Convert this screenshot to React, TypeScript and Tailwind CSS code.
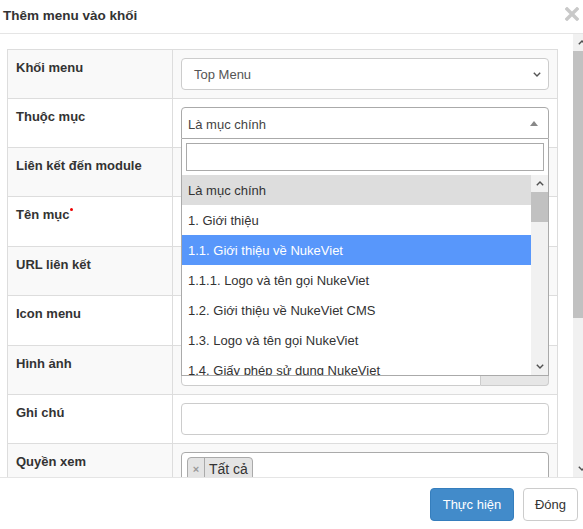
import React from "react";

type Field = "select" | "select2" | "plain" | "input" | "browse" | "multi";

interface Row {
  label: string;
  field: Field;
  height: string;
  required?: boolean;
}

const ROWS: Row[] = [
  { label: "Khối menu", field: "select", height: "h-[49px]" },
  { label: "Thuộc mục", field: "select2", height: "h-[49px]" },
  { label: "Liên kết đến module", field: "plain", height: "h-[49px]" },
  { label: "Tên mục", field: "input", height: "h-[50px]", required: true },
  { label: "URL liên kết", field: "input", height: "h-[49px]" },
  { label: "Icon menu", field: "browse", height: "h-[50px]" },
  { label: "Hình ảnh", field: "browse", height: "h-[49px]" },
  { label: "Ghi chú", field: "input", height: "h-[49px]" },
  { label: "Quyền xem", field: "multi", height: "h-[80px]" },
];

const OPTIONS = [
  "Là mục chính",
  "1. Giới thiệu",
  "1.1. Giới thiệu về NukeViet",
  "1.1.1. Logo và tên gọi NukeViet",
  "1.2. Giới thiệu về NukeViet CMS",
  "1.3. Logo và tên gọi NukeViet",
  "1.4. Giấy phép sử dụng NukeViet",
];

function Chevron({ up, color = "#505050" }: { up?: boolean; color?: string }) {
  return (
    <svg width="8" height="5" viewBox="0 0 8 5">
      <polyline
        points={up ? "0.8,4.3 4,1.1 7.2,4.3" : "0.8,0.7 4,3.9 7.2,0.7"}
        fill="none"
        stroke={color}
        strokeWidth="1.4"
      />
    </svg>
  );
}

function Scrollbar({ thumbHeight }: { thumbHeight: string }) {
  return (
    <div className="w-[17px] shrink-0 h-full bg-[#f1f1f1] flex flex-col">
      <div className="h-[17px] shrink-0 flex items-center justify-center">
        <Chevron up />
      </div>
      <div className="flex-1 min-h-0">
        <div className={`${thumbHeight} w-full bg-[#c1c1c1]`} />
      </div>
      <div className="h-[17px] shrink-0 flex items-center justify-center">
        <Chevron />
      </div>
    </div>
  );
}

function ParentSelect() {
  return (
    <div className="relative">
      <div className="h-[32px] border border-[#aaa] rounded-t-[4px] bg-white flex items-center pl-[6px] pr-[10px] pt-[3px]">
        <span className="flex-1 text-[#444]">Là mục chính</span>
        <span className="-mt-[3px] w-0 h-0 border-l-[4px] border-r-[4px] border-b-[5px] border-l-transparent border-r-transparent border-b-[#888]" />
      </div>
      <div className="absolute left-0 right-0 top-full z-10 bg-white border border-t-0 border-[#aaa] pt-[4px]">
        <div className="mx-[4px] h-[28px] border border-[#aaa] bg-white" />
        <div className="mt-[4px] h-[200px] flex overflow-hidden">
          <div className="flex-1 min-w-0">
            {OPTIONS.map((o, i) => (
              <div
                key={o}
                className={`h-[30px] pl-[6px] pt-[2px] flex items-center whitespace-nowrap ${
                  i === 0
                    ? "bg-[#ddd] text-[#333]"
                    : i === 2
                    ? "bg-[#5897fb] text-white"
                    : "bg-white text-[#333]"
                }`}
              >
                {o}
              </div>
            ))}
          </div>
          <Scrollbar thumbHeight="h-[30px]" />
        </div>
      </div>
    </div>
  );
}

function FieldCell({ field }: { field: Field }) {
  if (field === "select")
    return (
      <div className="h-[32px] border border-[#ccc] rounded-[4px] bg-white flex items-center pl-[12px] pr-[7px]">
        <span className="flex-1 text-[#555] pt-[2px]">Top Menu</span>
        <Chevron color="#555" />
      </div>
    );
  if (field === "select2") return <ParentSelect />;
  if (field === "plain" || field === "input")
    return <div className="h-[32px] border border-[#ccc] rounded-[4px] bg-white" />;
  if (field === "browse")
    return (
      <div className="h-[32px] flex">
        <div className="flex-1 border border-[#ccc] rounded-l-[4px] bg-white" />
        <div className="w-[68px] border border-l-0 border-[#ccc] rounded-r-[4px] bg-[#e6e6e6]" />
      </div>
    );
  return (
    <div className="h-[60px] border border-[#aaa] rounded-[4px] bg-white pt-[4px] pl-[5px]">
      <div className="inline-flex h-[24px] items-stretch border border-[#aaa] rounded-[4px] bg-[#e4e4e4]">
        <span className="w-[17px] border-r border-[#aaa] flex items-center justify-center text-[#999] text-[11px] font-bold">
          ×
        </span>
        <span className="px-[4px] flex items-center text-[#333] text-[14px]">Tất cả</span>
      </div>
    </div>
  );
}

export default function App() {
  return (
    <div className="w-[583px] h-[529px] overflow-hidden bg-white flex flex-col font-['Liberation_Sans',Arial,sans-serif] text-[13px] text-[#333]">
      {/* header */}
      <div className="h-[34px] shrink-0 border-b border-[#e5e5e5] flex items-center justify-between pl-[3px] pr-[4px]">
        <h4 className="text-[13.5px] font-bold text-[#333]">Thêm menu vào khối</h4>
        <svg width="14" height="14" viewBox="0 0 14 14" className="-mt-[5px]" aria-label="×">
          <path d="M2 2 L12 12 M12 2 L2 12" stroke="#c9c9c9" strokeWidth="3.4" strokeLinecap="square" />
        </svg>
      </div>

      {/* body */}
      <div className="flex-1 min-h-0 flex overflow-hidden">
        <div className="w-[573px] shrink-0 overflow-hidden pt-[15px] pl-[7px] pr-[15px]">
          <div className="border-l border-r border-t border-[#ddd]">
            {ROWS.map((r, i) => (
              <div
                key={r.label}
                className={`${r.height} flex border-b border-[#ddd] ${
                  i % 2 === 0 ? "bg-[#f9f9f9]" : "bg-white"
                }`}
              >
                <div className="w-[164px] shrink-0 px-[8px] pt-[9px] font-bold leading-[1.42857]">
                  {r.label}
                  {r.required && (
                    <span className="inline-block align-top ml-[1px] mt-[2px] w-[3px] h-[3px] rounded-full bg-[#e00]" />
                  )}
                </div>
                <div className="flex-1 min-w-0 border-l border-[#ddd] px-[8px] pt-[8px]">
                  <FieldCell field={r.field} />
                </div>
              </div>
            ))}
          </div>
        </div>
        <Scrollbar thumbHeight="h-[267px]" />
      </div>

      {/* footer */}
      <div className="h-[52px] shrink-0 border-t border-[#e5e5e5] flex justify-end items-start gap-[9px] pt-[10px] pr-[5px]">
        <button className="h-[33px] w-[84px] rounded-[4px] border border-[#357ebd] bg-[#428bca] text-white text-[13px]">
          Thực hiện
        </button>
        <button className="h-[33px] w-[55px] rounded-[4px] border border-[#ccc] bg-white text-[#333] text-[13px]">
          Đóng
        </button>
      </div>
    </div>
  );
}
